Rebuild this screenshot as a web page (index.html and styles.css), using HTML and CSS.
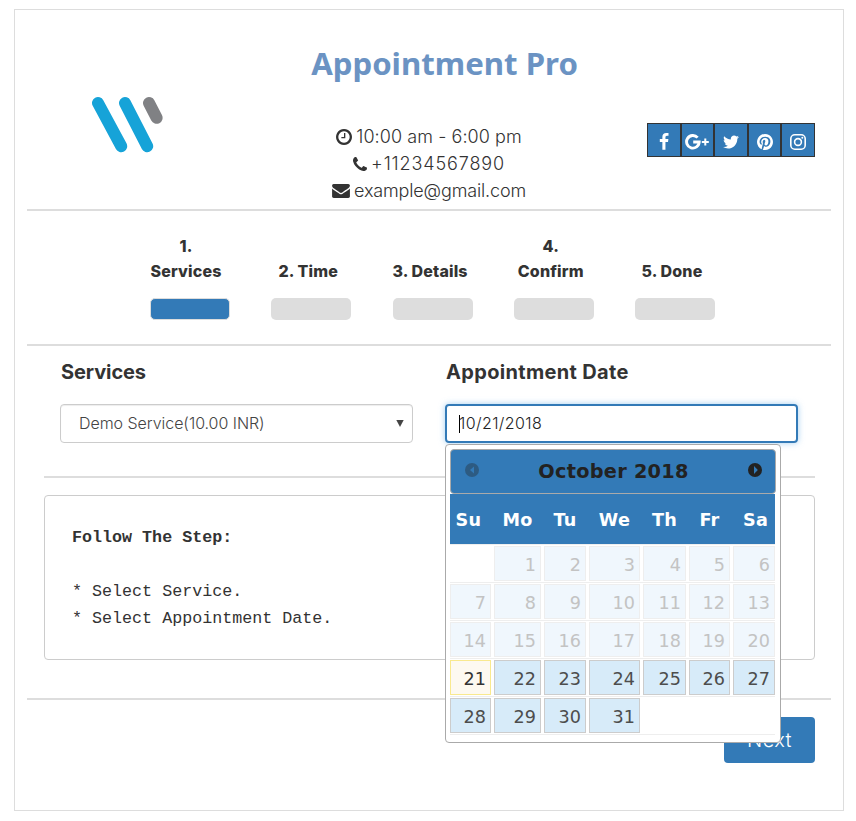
FILE: index.html
```html
<!DOCTYPE html>
<html lang="en">
<head>
<meta charset="utf-8">
<title>Appointment Pro</title>
<link rel="stylesheet" href="styles.css">
</head>
<body>
<main class="card">
  <header class="head">
    <svg class="logo" width="74" height="60" viewBox="0 0 74 60" fill="none" stroke-linecap="round" stroke-width="12">
      <path d="M7 8L30.200 51.200M34 8L56.200 51.200" stroke="#16a3d8"/>
      <path d="M58 8L65.600 22.800" stroke="#808184"/>
    </svg>
    <div class="brand">
      <h1>Appointment Pro</h1>
      <p class="contact"><svg class="fa" viewBox="128 128 1536 1536" width="16" height="16"><path d="M1024 544v448q0 14-9 23t-23 9H672q-14 0-23-9t-9-23v-64q0-14 9-23t23-9h224V544q0-14 9-23t23-9h64q14 0 23 9t9 23zm416 352q0-148-73-273t-198-198-273-73-273 73-198 198-73 273 73 273 198 198 273 73 273-73 198-198 73-273zm224 0q0 209-103 385.500T1281.500 1561 896 1664t-385.500-103T231 1281.500 128 896t103-385.500T510.500 231 896 128t385.500 103T1561 510.500 1664 896z"/></svg><span class="hours">10:00 am - 6:00 pm</span></p>
      <p class="contact"><svg class="fa" viewBox="194 130 1406 1406" width="14" height="14"><path d="M1600 1240q0 27-10 70.500t-18.500 68.500q-21 50-122 106-94 51-186 51-27 0-52.500-3.500T1153 1520t-47.500-14.500-55.500-20.500-49-18q-98-35-175-83-128-79-264.500-215.500T346 904q-48-77-83-175-3-9-18-49t-20.500-55.500T210 577t-12.500-57.500T194 467q0-92 51-186 56-101 106-122 25-11 68.500-18.500T490 130q14 0 21 3 18 6 53 76 11 19 30 54t35 63.500 31 53.500q3 4 17.500 25t21.500 35.500 7 28.500q0 20-28.500 50t-62 55-62 53-28.500 46q0 9 5 22.500t8.500 20.500 14 24 11.500 19q76 137 174 235t235 174q2 1 19 11.500t24 14 20.500 8.500 22.500 5q18 0 46-28.500t53-62 55-62 50-28.500q14 0 28.500 7t35.500 21.500 25 17.500q25 15 53.500 31t63.500 35 54 30q70 35 76 53 3 7 3 21z"/></svg><span class="phone">+11234567890</span></p>
      <p class="contact"><svg class="fa" viewBox="0 256 1792 1408" width="18" height="14"><path d="M1792 710v794q0 66-47 113t-113 47H160q-66 0-113-47T0 1504V710q44 49 101 87 362 246 497 345 57 42 92.500 65.500t94.500 48 110 24.500h2q51 0 110-24.500t94.500-48 92.500-65.500q170-123 498-345 57-39 100-87zm0-294q0 79-49 151t-122 123q-376 261-468 325-10 7-42.500 31t-54 38.500-52 32.500-57.500 27-50 9h-2q-23 0-50-9t-57.500-27-52-32.500-54-38.500-42.500-31q-91-64-262-182.500T172 690q-62-42-117-115.500T0 438q0-78 41.500-130T160 256h1472q65 0 112.500 47t47.500 113z"/></svg><span class="mail">example@gmail.com</span></p>
    </div>
    <nav class="social">
      <a><svg viewBox="0 0 1792 1792" width="18" height="18"><path d="M1343 12v264h-157q-86 0-116 36t-30 108v189h293l-39 296h-254v759H734V905H479V609h255V391q0-186 104-288.500T1115 0q147 0 228 12z"/></svg></a>
      <a><svg viewBox="0 0 24 16" width="24" height="16"><path d="M12.600 3.600A6.300 6.300 0 1 0 14.200 8H8.200" fill="none" stroke="#fff" stroke-width="2.900"/><path d="M16.800 7h2.500V4.500h2V7h2.500v2h-2.500v2.500h-2V9h-2.500z"/></svg></a>
      <a><svg viewBox="0 0 1792 1792" width="18" height="18"><path d="M1684 408q-67 98-162 167 1 14 1 42 0 130-38 259.500T1369.500 1125 1185 1335.500t-258 146-323 54.500q-271 0-496-145 35 4 78 4 225 0 401-138-105-2-188-64.500T285 1033q33 5 61 5 43 0 85-11-112-23-185.500-111.500T172 710v-4q68 38 146 41-66-44-105-115t-39-154q0-88 44-163 121 149 294.500 238.500T884 653q-8-38-8-74 0-134 94.500-228.500T1199 256q140 0 236 102 109-21 205-78-37 115-142 178 93-10 186-50z"/></svg></a>
      <a><svg viewBox="128 128 1536 1536" width="16" height="16"><path d="M1664 896q0 209-103 385.500T1281.500 1561 896 1664q-111 0-218-32 59-93 78-164 9-34 54-211 20 39 73 67.500t114 28.500q121 0 216-68.500t147-188.500 52-270q0-114-59.500-214T1180 449t-255-63q-105 0-196 29t-154.500 77-109 110.500-67 129.500T377 866q0 104 40 183t117 111q30 12 38-20 2-7 8-31t8-30q6-23-11-43-51-61-51-151 0-151 104.500-259.500T904 517q151 0 235.500 82t84.500 213q0 170-68.500 289T980 1220q-61 0-98-43.500T859 1072q8-35 26.500-93.500t30-103T927 800q0-50-27-83t-77-33q-62 0-105 57t-43 142q0 73 25 122l-99 418q-17 70-13 177-206-91-333-281T128 896q0-209 103-385.500T510.500 231 896 128t385.500 103T1561 510.500 1664 896z"/></svg></a>
      <a><svg viewBox="0 0 16 16" width="16" height="16"><g fill="none" stroke="#fff" stroke-width="1.600"><rect x=".8" y=".8" width="14.400" height="14.400" rx="4"/><circle cx="8" cy="8" r="3.400"/></g><circle cx="12.300" cy="3.700" r="1"/></svg></a>
    </nav>
  </header>

  <ol class="steps">
    <li class="step active"><span>1.<br>Services</span><i></i></li>
    <li class="step"><span>2. Time</span><i></i></li>
    <li class="step"><span>3. Details</span><i></i></li>
    <li class="step"><span>4.<br>Confirm</span><i></i></li>
    <li class="step"><span>5. Done</span><i></i></li>
  </ol>

  <section class="form">
    <div class="field">
      <h2 class="h-services">Services</h2>
      <div class="control select"><span>Demo Service(10.00 INR)</span><svg width="8" height="7" viewBox="0 0 8 7"><path d="M.3 0h7.400L4 7z" fill="#444"/></svg></div>
    </div>
    <div class="field">
      <h2 class="h-date">Appointment Date</h2>
      <div class="control date"><b class="caret"></b><span>10/21/2018</span></div>
      <div class="picker">
        <div class="picker-head">
          <svg class="dim" width="14" height="14" viewBox="0 0 14 14"><circle cx="7" cy="7" r="7" fill="#222"/><path d="M9 3.500v7L5 7z" fill="#337ab7"/></svg>
          <span>October 2018</span>
          <svg width="14" height="14" viewBox="0 0 14 14"><circle cx="7" cy="7" r="7" fill="#222"/><path d="M6 3v8L9.800 7z" fill="#337ab7"/></svg>
        </div>
        <div class="week names"><b>Su</b><b>Mo</b><b>Tu</b><b>We</b><b>Th</b><b>Fr</b><b>Sa</b></div>
        <div class="week past"><span></span><a>1</a><a>2</a><a>3</a><a>4</a><a>5</a><a>6</a></div>
        <div class="week past"><a>7</a><a>8</a><a>9</a><a>10</a><a>11</a><a>12</a><a>13</a></div>
        <div class="week past"><a>14</a><a>15</a><a>16</a><a>17</a><a>18</a><a>19</a><a>20</a></div>
        <div class="week"><a class="today">21</a><a>22</a><a>23</a><a>24</a><a>25</a><a>26</a><a>27</a></div>
        <div class="week"><a>28</a><a>29</a><a>30</a><a>31</a></div>
        <div class="week-end"></div>
      </div>
    </div>
  </section>

  <div class="guide-wrap">
    <pre class="guide"><b>Follow The Step:</b>

* Select Service.
* Select Appointment Date.</pre>
  </div>
  <footer class="foot"><button class="next">Next</button></footer>
</main>
</body>
</html>
```
FILE: styles.css
```css
* { box-sizing: border-box; }
body {
  margin: 0;
  padding: 9px 0 0 14px;
  background: #fff;
  color: #333;
  font-family: Inter, "Liberation Sans", sans-serif;
}
h1, h2, p, ol, pre { margin: 0; padding: 0; }
.card {
  width: 830px;
  height: 802px;
  padding: 0 12px;
  border: 1px solid #ddd;
}

/* header */
.head {
  display: grid;
  grid-template-columns: 268px 268px 268px;
  height: 201px;
  border-bottom: 2px solid #ddd;
}
.logo { margin: 85px 0 0 64px; }
.brand { text-align: center; }
h1 {
  height: 113px;
  padding-top: 34px;
  margin: 0 -20px 0 11px;
  font: bold 31.200px/38px "Noto Sans", sans-serif;
  color: #6b93c3;
  white-space: nowrap;
}
.contact {
  display: flex;
  align-items: center;
  justify-content: center;
  gap: 4px;
  height: 27px;
  font-size: 18px;
  font-weight: 300;
}
.hours { letter-spacing: .07px; }
.phone { letter-spacing: .87px; }
.mail { letter-spacing: -.15px; }
.fa { fill: #333; }
.social {
  display: flex;
  justify-self: end;
  width: 168px;
  height: 34px;
  margin: 113px 16px 0 0;
  border: 1px solid #333;
  background: #337ab7;
}
.social a {
  flex: 1;
  display: flex;
  align-items: center;
  justify-content: center;
  padding-top: 3px;
  fill: #fff;
}
.social a + a { border-left: 2px solid #333; }

/* progress */
.steps {
  display: grid;
  grid-template-columns: repeat(5, 80px);
  column-gap: 41.250px;
  align-items: end;
  height: 135px;
  padding: 0 0 24px 123px;
  border-bottom: 2px solid #ddd;
  list-style: none;
}
.step {
  text-align: center;
  font-size: 16px;
  font-weight: 800;
  line-height: 25px;
  letter-spacing: .15px;
  white-space: nowrap;
}
.step span { display: block; margin: 0 6px 14px 0; }
.step i { display: block; height: 22px; border-radius: 5px; background: #ddd; }
.step.active i { border: 1px solid #ddd; background: #337ab7; }
.step.active span { margin-right: 8px; }

/* fields */
.form {
  display: grid;
  grid-template-columns: 353px 353px;
  column-gap: 32px;
  height: 132px;
  margin: 0 16px 0 17px;
  padding-left: 16px;
  border-bottom: 2px solid #ddd;
}
.field { position: relative; }
h2 {
  padding: 13px 0 0 1px;
  height: 58px;
  font-size: 20px;
  font-weight: 700;
  line-height: 26px;
  white-space: nowrap;
}
.h-services { letter-spacing: -.1px; }
.h-date { letter-spacing: .33px; }
.control {
  display: flex;
  align-items: center;
  height: 39px;
  border-radius: 4px;
  font-size: 16px;
  font-weight: 300;
}
.control span { margin-bottom: 2px; letter-spacing: -.05px; }
.select {
  justify-content: space-between;
  padding: 0 8px 0 18px;
  border: 1px solid #ccc;
  box-shadow: inset 0 1px 1px rgba(0, 0, 0, .075);
  color: #444;
}
.date {
  padding-left: 12px;
  border: 2px solid #337ab7;
  box-shadow: 0 0 6px rgba(102, 175, 233, .6);
  color: #222;
}
.date span { letter-spacing: .4px; }
.caret { width: 1px; height: 18px; margin-right: -1px; background: #000; }

/* date picker */
.picker {
  position: absolute;
  top: 98px;
  left: 0;
  z-index: 2;
  width: 336px;
  height: 299px;
  padding: 4px;
  border: 1px solid #aaa;
  border-radius: 4px;
  background: #fff;
  font-family: "DejaVu Sans", sans-serif;
}
.picker-head {
  display: flex;
  align-items: center;
  justify-content: space-between;
  height: 45px;
  padding: 0 13px 0 14px;
  border: 1px solid #aaa;
  border-radius: 4px;
  background: #337ab7;
  color: #222;
  font-size: 19.300px;
  font-weight: 700;
  letter-spacing: .27px;
}
.picker-head svg { margin-bottom: 3px; }
.dim { opacity: .35; }
.week {
  display: grid;
  grid-template-columns: 41px 47px 42px 51px 43px 41px 42px;
  column-gap: 3px;
  width: 325px;
  height: 38px;
  padding: 1px 0;
  border-top: 1px solid #eee;
}
.week a {
  height: 35px;
  padding-right: 4px;
  border: 1px solid #ccc;
  background: #d7ebf9;
  color: #4d4d4d;
  font-size: 17.600px;
  line-height: 37px;
  text-align: right;
}
.week.past a { border-color: #eee; background: #f0f7fd; color: #c3c3c3; }
.week a.today { border-color: #f9e98e; background: #fdf9f0; color: #333; }
.week.names {
  height: 50px;
  padding: 0;
  border: 0;
  background: #337ab7;
  color: #fff;
  font-size: 17.600px;
  line-height: 52px;
  letter-spacing: .3px;
  text-align: center;
}
.names b:first-child { margin-left: -4px; }
.names b:last-child { margin-right: -3px; }
.week-end { width: 325px; border-top: 1px solid #eee; }

/* guide and footer */
.guide-wrap { height: 222px; padding: 17px 16px 0 17px; border-bottom: 2px solid #ddd; }
.guide {
  height: 165px;
  padding: 28px 27px;
  border: 1px solid #ccc;
  border-radius: 4px;
  font: 16.700px/27px "Liberation Mono", monospace;
}
.foot { display: flex; justify-content: flex-end; padding: 17px 16px 0 0; }
.next {
  width: 91px;
  height: 46px;
  padding: 0;
  border: 0;
  border-radius: 4px;
  background: #337ab7;
  color: #fff;
  font: 300 20px Inter, sans-serif;
  letter-spacing: .4px;
}
```
